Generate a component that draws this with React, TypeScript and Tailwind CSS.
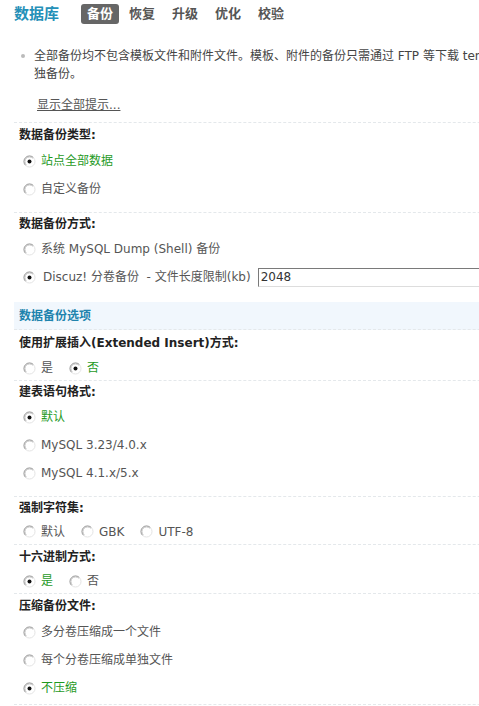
import React from 'react';

const font = { fontFamily: '"DejaVu Sans", "Noto Sans CJK SC", sans-serif' };

function Radio({ checked }: { checked?: boolean }) {
  return (
    <svg width="13" height="13" viewBox="0 0 13 13" className="shrink-0">
      <circle cx="6.5" cy="6.5" r="5.5" fill="#fff" />
      <path d="M2.6 10.4 A5.5 5.5 0 0 1 10.4 2.6" fill="none" stroke="#8a8a8a" strokeWidth="1" />
      <path d="M10.4 2.6 A5.5 5.5 0 0 1 2.6 10.4" fill="none" stroke="#e4e4e4" strokeWidth="1" />
      <path d="M3.3 9.7 A4.5 4.5 0 0 1 9.7 3.3" fill="none" stroke="#c8c8c8" strokeWidth="1" />
      {checked && <circle cx="6.5" cy="6.5" r="2" fill="#111" />}
    </svg>
  );
}

function Opt({ label, checked, className = '' }: { label: React.ReactNode; checked?: boolean; className?: string }) {
  return (
    <span className={`flex items-center gap-[5px] ${className}`}>
      <Radio checked={checked} />
      <span className={checked ? 'text-[#1f9a1f]' : 'text-[#555]'}>{label}</span>
    </span>
  );
}

function Label({ children, h = 'h-[24px]' }: { children: React.ReactNode; h?: string }) {
  return <div className={`${h} flex items-center px-[5px] font-bold text-[#222]`}>{children}</div>;
}

function List({ items, pb }: { items: { label: React.ReactNode; checked?: boolean }[]; pb: string }) {
  return (
    <div className={`pl-[9px] border-b border-dashed border-[#e4e8eb] ${pb}`}>
      {items.map((it, i) => (
        <div key={i} className="h-[28px] flex items-center">
          <Opt label={it.label} checked={it.checked} />
        </div>
      ))}
    </div>
  );
}

function Inline({ children, h = 'h-[25px]' }: { children: React.ReactNode; h?: string }) {
  return (
    <div className={`${h} pl-[9px] flex items-center border-b border-dashed border-[#e4e8eb]`}>{children}</div>
  );
}

export default function App() {
  return (
    <div className="w-[479px] h-[706px] overflow-hidden bg-white text-[12px] leading-[18px]" style={font}>
      <div className="w-[720px]">
        <div className="flex items-center h-[28px] pl-[14px]">
          <span className="text-[15px] font-bold text-[#2590b8] mr-[22px]">数据库</span>
          <span className="bg-[#666] text-white font-bold text-[13px] rounded-[3px] px-[6px] h-[20px] flex items-center mr-[10px]">备份</span>
          {['恢复', '升级', '优化', '校验'].map((t) => (
            <span key={t} className="font-bold text-[13px] text-[#555] mr-[17px]">{t}</span>
          ))}
        </div>

        <div className="pt-[19px] pl-[21px]">
          <div className="flex">
            <span className="w-[4px] h-[4px] rounded-full bg-[#bbb] mt-[7px] mr-[9px] shrink-0" />
            <p className="text-[#444] whitespace-nowrap">
              全部备份均不包含模板文件和附件文件。模板、附件的备份只需通过 FTP 等下载 template/ 和 data/attachment/ 目录即可。Discuz! 不提供单
              <br />
              独备份。
            </p>
          </div>
          <div className="pt-[13px] pl-[16px]">
            <a className="underline text-[#555]">显示全部提示...</a>
          </div>
        </div>

        <div className="ml-[14px] mt-[8px] border-t border-dashed border-[#e4e8eb]">
          <Label>数据备份类型:</Label>
          <List pb="pb-[9px]" items={[{ label: '站点全部数据', checked: true }, { label: '自定义备份' }]} />

          <Label h="h-[22px]">数据备份方式:</Label>
          <div className="pl-[9px] pb-[11px]">
            <div className="h-[28px] flex items-center">
              <Opt label="系统 MySQL Dump (Shell) 备份" />
            </div>
            <div className="h-[28px] flex items-center">
              <Radio checked />
              <span className="ml-[7px] text-[#555]">Discuz! 分卷备份 &nbsp;- 文件长度限制(kb)</span>
              <input
                readOnly
                value="2048"
                className="ml-[7px] w-[300px] h-[19px] px-[2px] text-[12px] text-[#333] border border-t-[#7a7a7a] border-l-[#7a7a7a] border-r-[#ddd] border-b-[#ddd] outline-none"
                style={font}
              />
            </div>
          </div>

          <div className="h-[28px] bg-[#f1f7fd] flex items-center px-[5px] font-bold text-[#2083ad] border-b border-dashed border-[#e4e8eb]">
            数据备份选项
          </div>

          <Label h="h-[26px]">使用扩展插入(Extended Insert)方式:</Label>
          <Inline>
            <Opt label="是" className="mr-[16px]" />
            <Opt label="否" checked />
          </Inline>

          <Label h="h-[22px]">建表语句格式:</Label>
          <List
            pb="pb-[9px]"
            items={[{ label: '默认', checked: true }, { label: 'MySQL 3.23/4.0.x' }, { label: 'MySQL 4.1.x/5.x' }]}
          />

          <Label h="h-[22px]">强制字符集:</Label>
          <Inline h="h-[26px]">
            <Opt label="默认" className="mr-[16px]" />
            <Opt label="GBK" className="mr-[16px]" />
            <Opt label="UTF-8" />
          </Inline>

          <Label h="h-[24px]">十六进制方式:</Label>
          <Inline h="h-[25px]">
            <Opt label="是" checked className="mr-[16px]" />
            <Opt label="否" />
          </Inline>

          <Label>压缩备份文件:</Label>
          <List
            pb="pb-[2px]"
            items={[{ label: '多分卷压缩成一个文件' }, { label: '每个分卷压缩成单独文件' }, { label: '不压缩', checked: true }]}
          />
        </div>
      </div>
    </div>
  );
}
